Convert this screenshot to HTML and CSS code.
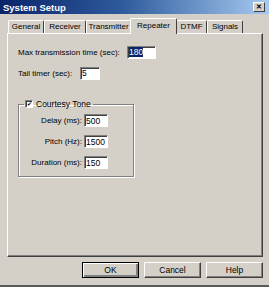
FILE: index.html
```html
<!DOCTYPE html>
<html lang="en">
<head>
    <meta charset="UTF-8">
    <title>System Setup</title>
    <link rel="stylesheet" href="styles.css">
</head>
<body>
    <div class="window">
        <div class="titlebar">
            <span class="title">System Setup</span>
            <span class="close">&#x2715;</span>
        </div>

        <div class="tabs">
            <div class="tab tab-general">General</div>
            <div class="tab tab-receiver">Receiver</div>
            <div class="tab tab-transmitter">Transmitter</div>
            <div class="tab tab-repeater active">Repeater</div>
            <div class="tab tab-dtmf">DTMF</div>
            <div class="tab tab-signals">Signals</div>
        </div>

        <div class="panel">
            <div class="row row-max">
                <label for="maxTime">Max transmission time (sec):</label>
                <input type="text" id="maxTime" class="field field-max" value="180">
            </div>
            <div class="row row-tail">
                <label for="tailTimer">Tail timer (sec):</label>
                <input type="text" id="tailTimer" class="field field-tail" value="5">
            </div>

            <fieldset class="group">
                <legend>
                    <span class="check">&#x2714;</span>
                    Courtesy Tone
                </legend>
                <div class="grow">
                    <label for="delay">Delay (ms):</label>
                    <input type="text" id="delay" class="field" value="500">
                </div>
                <div class="grow">
                    <label for="pitch">Pitch (Hz):</label>
                    <input type="text" id="pitch" class="field" value="1500">
                </div>
                <div class="grow">
                    <label for="duration">Duration (ms):</label>
                    <input type="text" id="duration" class="field" value="150">
                </div>
            </fieldset>
        </div>

        <div class="buttons">
            <button class="btn default">OK</button>
            <button class="btn">Cancel</button>
            <button class="btn">Help</button>
        </div>
    </div>

    <script>
        var max = document.getElementById("maxTime");
        max.focus();
        max.select();
    </script>
</body>
</html>
```

FILE: styles.css
```css
body {
    margin: 0;
    padding: 0;
    font-family: "Liberation Sans", Arial, sans-serif;
    font-size: 8px;
    color: #000;
    background-color: #d4d0c8;
}

.window {
    width: 269px;
    height: 287px;
    box-sizing: border-box;
    background-color: #d4d0c8;
    border-bottom: 2px solid #5a5a5a;
}

.titlebar {
    height: 14px;
    display: flex;
    align-items: center;
    justify-content: space-between;
    padding: 0 4px 0 3px;
    background: linear-gradient(to right, #0a246a, #2d5a9c 45%, #a6caf0);
}

.title {
    color: #fff;
    font-weight: bold;
    font-size: 9.5px;
}

.close {
    width: 12px;
    height: 10px;
    box-sizing: border-box;
    background-color: #d4d0c8;
    border: 1px solid;
    border-color: #fff #404040 #404040 #fff;
    font-size: 7px;
    font-weight: bold;
    line-height: 8px;
    text-align: center;
}

.tabs {
    display: flex;
    align-items: flex-end;
    height: 15px;
    margin-top: 4px;
    padding-left: 8px;
}

.tab {
    height: 13px;
    box-sizing: border-box;
    border: 1px solid;
    border-color: #fff #404040 transparent #fff;
    border-bottom: none;
    border-radius: 2px 2px 0 0;
    text-align: center;
    line-height: 12px;
}

.tab-general { width: 36px; }
.tab-receiver { width: 42px; }
.tab-transmitter { width: 45px; }
.tab-repeater { width: 45px; }
.tab-dtmf { width: 31px; }
.tab-signals { width: 36px; }

.tab.active {
    position: relative;
    z-index: 1;
    height: 16px;
    margin: 0 -1px -1px -1px;
    width: 47px;
    background-color: #d4d0c8;
    line-height: 14px;
}

.panel {
    height: 224px;
    box-sizing: border-box;
    margin: 0 6px 0 7px;
    padding: 11px 0 0 10px;
    border: 1px solid;
    border-color: #fff #404040 #404040 #fff;
    box-shadow: inset -1px -1px #808080;
}

.row {
    display: flex;
    align-items: center;
    height: 14px;
}

.row-tail {
    margin-top: 7px;
}

.row-max label {
    width: 109px;
}

.row-tail label {
    width: 62px;
}

.field {
    width: 24px;
    height: 13px;
    box-sizing: border-box;
    margin: 0;
    padding: 0 1px;
    border: 1px solid;
    border-color: #808080 #fff #fff #808080;
    box-shadow: inset 1px 1px #404040;
    background-color: #fff;
    font-family: "Liberation Sans", Arial, sans-serif;
    font-size: 8.5px;
    outline: none;
}

.field-max {
    width: 29px;
}

.field-tail {
    width: 20px;
}

.field::selection {
    background-color: #0a246a;
    color: #fff;
}

.group {
    width: 116px;
    height: 78px;
    box-sizing: border-box;
    margin: 19px 0 0 0;
    padding: 5px 0 0 0;
    border: 1px solid #808080;
    box-shadow: inset 1px 1px #fff, 1px 1px #fff;
}

.group legend {
    display: flex;
    align-items: center;
    gap: 3px;
    margin-left: 5px;
    padding: 0 2px 0 1px;
    font-size: 8.5px;
}

.check {
    width: 8px;
    height: 8px;
    box-sizing: border-box;
    border: 1px solid;
    border-color: #808080 #fff #fff #808080;
    box-shadow: inset 1px 1px #404040;
    background-color: #fff;
    font-size: 6px;
    line-height: 6px;
    text-align: center;
}

.grow {
    display: flex;
    align-items: center;
    height: 13px;
    margin-bottom: 8px;
}

.grow label {
    width: 63px;
    padding-right: 2px;
    text-align: right;
}

.buttons {
    display: flex;
    justify-content: flex-end;
    gap: 5px;
    margin-top: 5px;
    padding-right: 6px;
}

.btn {
    width: 57px;
    height: 16px;
    box-sizing: border-box;
    padding: 0;
    border: 1px solid;
    border-color: #fff #404040 #404040 #fff;
    box-shadow: inset -1px -1px #808080;
    background-color: #d4d0c8;
    font-family: "Liberation Sans", Arial, sans-serif;
    font-size: 8.5px;
    color: #000;
}

.btn.default {
    border: 1px solid #000;
    box-shadow: inset 1px 1px #fff, inset -2px -2px #808080;
}
```
